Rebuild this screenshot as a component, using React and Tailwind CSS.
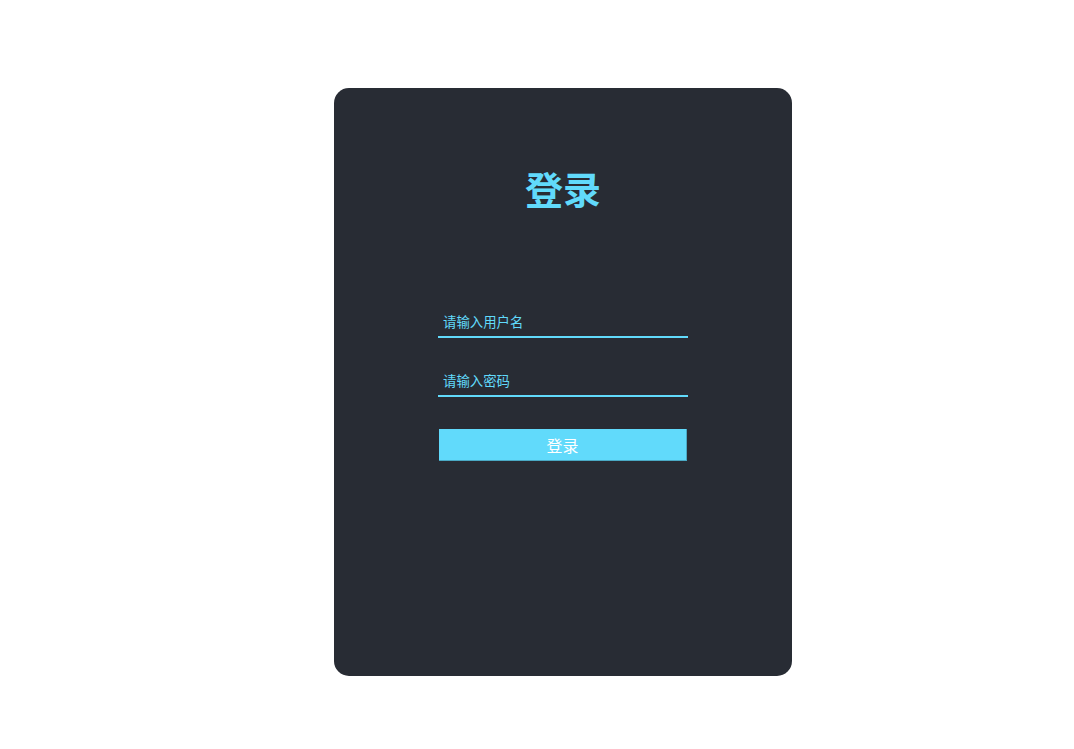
import React from 'react';

const font = { fontFamily: '"Noto Sans CJK SC", "Noto Sans", sans-serif' };

const App = () => {
  return (
    <div className="min-h-[749px] bg-white pt-[88px] pl-[334px]" style={font}>
      <div className="w-[458px] h-[588px] rounded-[15px] bg-[#282c34] flex flex-col items-center">
        <h1 className="mt-[80px] text-[38px] leading-[40px] font-bold text-[#61dafb]">登录</h1>
        <form className="mt-[100px] w-[250px] flex flex-col">
          <input
            type="text"
            placeholder="请输入用户名"
            className="h-[30px] bg-transparent border-b-2 border-[#61dafb] px-[5px] pb-[3px] text-[13.4px] text-[#61dafb] placeholder-[#61dafb] outline-none"
          />
          <input
            type="password"
            placeholder="请输入密码"
            className="mt-[29px] h-[30px] bg-transparent border-b-2 border-[#61dafb] px-[5px] pb-[3px] text-[13.4px] text-[#61dafb] placeholder-[#61dafb] outline-none"
          />
          <button
            type="button"
            className="mt-[32px] mx-[1px] h-[32px] bg-[#61dafb] border-r border-b border-[#4aa9c4] text-white text-[16px]"
          >
            登录
          </button>
        </form>
      </div>
    </div>
  );
};

export default App;
